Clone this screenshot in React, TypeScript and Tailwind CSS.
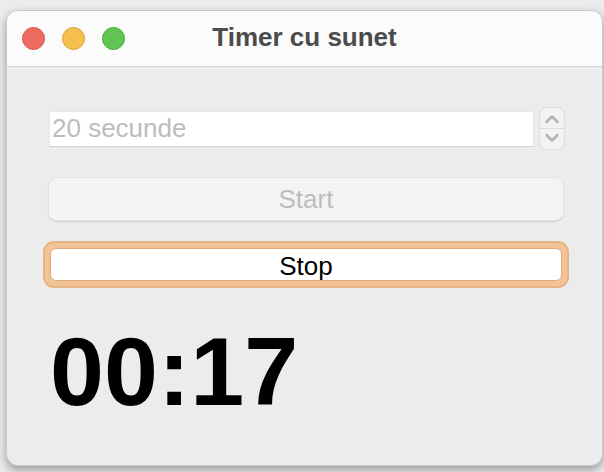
import React from 'react';

const font = { fontFamily: '"Liberation Sans", Arial, sans-serif' };

const Stepper = () => (
  <div className="ml-[5px] flex h-[43px] w-[26px] flex-col overflow-hidden rounded-[8px] border border-[#dedede] bg-[#f3f3f3]">
    <div className="flex flex-1 items-center justify-center border-b border-[#dcdcdc] pt-[2px]">
      <svg width="16" height="10" viewBox="0 0 16 10">
        <path d="M2.5 8 L8 2.5 L13.5 8" fill="none" stroke="#b4b4b4" strokeWidth="2.6" strokeLinecap="round" strokeLinejoin="round" />
      </svg>
    </div>
    <div className="flex flex-1 items-center justify-center pb-[2px]">
      <svg width="16" height="10" viewBox="0 0 16 10">
        <path d="M2.5 2 L8 7.5 L13.5 2" fill="none" stroke="#b4b4b4" strokeWidth="2.6" strokeLinecap="round" strokeLinejoin="round" />
      </svg>
    </div>
  </div>
);

const App = () => {
  return (
    <div className="h-[472px] w-[604px] overflow-hidden bg-[#ececec] pl-[6px] pt-[10px]" style={font}>
      <div className="flex h-[456px] w-[597px] flex-col overflow-hidden rounded-[12px] border border-[#c9c9c9] bg-[#ececec] shadow-[0_4px_10px_rgba(0,0,0,0.35)]">
        {/* title bar */}
        <div className="relative flex h-[56px] shrink-0 items-center border-b border-[#d4d4d4] bg-[#fbfbfb] pl-[15px]">
          <div className="flex gap-[17px]">
            <span className="h-[23px] w-[23px] rounded-full border border-[#d9574f] bg-[#ed6a5e]" />
            <span className="h-[23px] w-[23px] rounded-full border border-[#d9a33a] bg-[#f5bf4f]" />
            <span className="h-[23px] w-[23px] rounded-full border border-[#4ca83c] bg-[#61c554]" />
          </div>
          <div className="absolute inset-0 flex items-center justify-center pb-[2px] text-[26px] font-bold text-[#4b4b4b]">
            Timer cu sunet
          </div>
        </div>

        {/* body */}
        <div className="flex flex-col pl-[42px] pr-[31px] pt-[40px]">
          <div className="flex items-center">
            <div className="flex h-[36px] w-[485px] items-center border border-[#e6e6e6] border-b-[#d0d0d0] bg-white pl-[2px] text-[26px] text-[#bdbdbd]">
              20 secunde
            </div>
            <Stepper />
          </div>

          <button className="ml-[-1px] mt-[27px] flex h-[44px] w-[516px] items-center justify-center rounded-[9px] border border-[#e3e3e3] bg-[#f4f4f4] text-[26px] text-[#bdbdbd] shadow-[0_1px_1px_rgba(0,0,0,0.12)]">
            Start
          </button>

          <div className="ml-[-6px] mt-[20px] w-[526px] rounded-[11px] border-[2px] border-[#e6b384] bg-[#f1c395] p-[5px]">
            <button className="flex h-[33px] w-full items-center justify-center rounded-[6px] border border-[#e2aa7c] bg-white pt-[3px] text-[26px] text-black">
              Stop
            </button>
          </div>

          <div className="ml-[1px] mt-[35px] text-[97px] font-bold leading-none text-black">00:17</div>
        </div>
      </div>
    </div>
  );
};

export default App;
